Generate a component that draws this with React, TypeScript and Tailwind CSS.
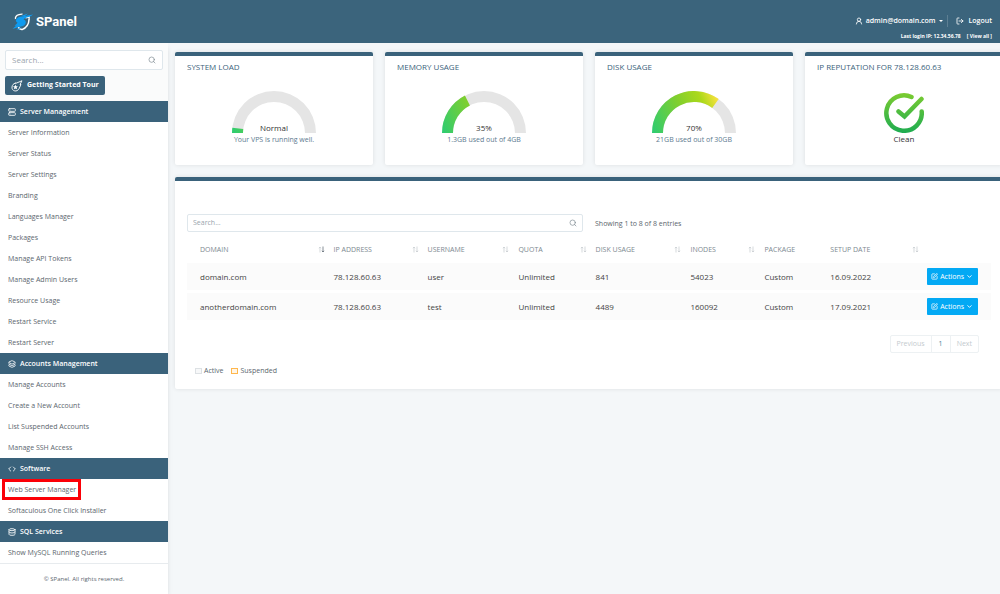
import { ChevronDown, Code, Database, Layers, LogOut, Search, Server, SquarePen, UserRound } from 'lucide-react'

const menu = [
  {
    title: 'Server Management',
    icon: Server,
    items: [
      'Server Information',
      'Server Status',
      'Server Settings',
      'Branding',
      'Languages Manager',
      'Packages',
      'Manage API Tokens',
      'Manage Admin Users',
      'Resource Usage',
      'Restart Service',
      'Restart Server',
    ],
  },
  {
    title: 'Accounts Management',
    icon: Layers,
    items: ['Manage Accounts', 'Create a New Account', 'List Suspended Accounts', 'Manage SSH Access'],
  },
  {
    title: 'Software',
    icon: Code,
    items: ['Web Server Manager', 'Softaculous One Click Installer'],
  },
  {
    title: 'SQL Services',
    icon: Database,
    items: ['Show MySQL Running Queries'],
  },
]

const columns = [
  { label: 'DOMAIN', width: 'w-[17.6%]', sort: 'active' },
  { label: 'IP ADDRESS', width: 'w-[11.7%]', sort: 'idle' },
  { label: 'USERNAME', width: 'w-[11.3%]', sort: 'idle' },
  { label: 'QUOTA', width: 'w-[9.6%]', sort: 'idle' },
  { label: 'DISK USAGE', width: 'w-[11.8%]', sort: 'idle' },
  { label: 'INODES', width: 'w-[9.2%]', sort: 'idle' },
  { label: 'PACKAGE', width: 'w-[8.2%]', sort: '' },
  { label: 'SETUP DATE', width: 'w-[12.1%]', sort: 'idle' },
]

const accounts = [
  ['domain.com', '78.128.60.63', 'user', 'Unlimited', '841', '54023', 'Custom', '16.09.2022'],
  ['anotherdomain.com', '78.128.60.63', 'test', 'Unlimited', '4489', '160092', 'Custom', '17.09.2021'],
]

function Logo() {
  return (
    <svg viewBox="0 0 22 18" className="h-[18px] w-[22px]" fill="none">
      <path d="M3.500 6C3 3.500 4.500 2.300 7 1.600C8.500 1.200 9.500 1 10.500 1.200" stroke="#fff" strokeWidth="1.300" />
      <path d="M17 6.500C16.800 11.500 14.400 15 10 16.600C8 16 7 15.300 6 14.400" stroke="#fff" strokeWidth="1.500" />
      <path d="M13.500 4.800L17.200 4L17 7" stroke="#fff" strokeWidth="1.300" />
      <path d="M21 1.500C17 2 15.500 2.600 12.500 3C8.500 3.400 5 4.300 4 6.800C3.500 8.300 4.500 9.200 5.500 9.600C5 10.800 3.500 12 2.500 13L4.500 12.600L0.500 15.800C4.500 14.900 6 14 9 13.500C12 13 13.800 11.400 13.800 9.200C13.800 7.500 12.500 6.900 11.500 6.500C12 5.800 13 5.400 14 4.800C16.500 4 19 3.500 21 1.500Z" fill="#0f9bf0" />
      <path d="M9 3L16 0.600L13 3Z" fill="#0f9bf0" />
      <path d="M4 16.500L10 14.200L7 16.500Z" fill="#0f9bf0" />
    </svg>
  )
}

function CometIcon() {
  return (
    <svg viewBox="0 0 24 24" className="size-3" fill="none" stroke="currentColor" strokeWidth="1.800" strokeLinejoin="round">
      <path d="M4 9L9 5.500L8.800 7L22 1.500L18 9L20 9L16 17.500C14 21 10.500 22.500 7.500 21.800C3.500 21 1.500 17.500 2 14C2.200 12 3 10.300 4 9Z" />
      <path d="M9 9L10.400 12.300L14 12.700L11.300 15.200L12.100 18.700L9 16.800L5.900 18.700L6.700 15.200L4 12.700L7.600 12.300Z" fill="currentColor" stroke="none" />
    </svg>
  )
}

function SortIcon({ active }: { active: boolean }) {
  return (
    <svg viewBox="0 0 7 7" className="size-[7px]" fill="none" strokeWidth="0.700">
      <path d="M2 6.500V1M0.900 2.200L2 1L3.100 2.200" stroke="#c3c9cd" />
      <path d="M5 0.500V6M3.900 4.800L5 6L6.100 4.800" stroke={active ? '#55606a' : '#c3c9cd'} />
    </svg>
  )
}

function Gauge({ id, value }: { id: string; value: number }) {
  const angle = Math.PI * (1 - value / 100)
  const x = Math.cos(angle)
  const y = Math.sin(angle)
  const sector = `M0 42A42 42 0 0 1 ${42 + 42 * x} ${42 - 42 * y}L${42 + 31 * x} ${42 - 31 * y}A31 31 0 0 0 11 42Z`

  return (
    <svg viewBox="0 0 84 42" className="h-[42px] w-[84px]">
      <defs>
        <linearGradient id={id} gradientUnits="userSpaceOnUse" x1="0" y1="40" x2="66" y2="10">
          <stop offset="0" stopColor="#2ecc71" />
          <stop offset="0.500" stopColor="#82cf2d" />
          <stop offset="0.800" stopColor="#acd91b" />
          <stop offset="1" stopColor="#f5e13d" />
        </linearGradient>
      </defs>
      <path d="M0 42A42 42 0 0 1 84 42H73A31 31 0 0 0 11 42Z" fill="#e5e5e5" />
      <path d={sector} fill={`url(#${id})`} />
    </svg>
  )
}

function StatCard({ title, children }: { title: string; children: React.ReactNode }) {
  return (
    <section className="h-[113px] rounded-xs border-t-4 border-[#3a627b] bg-white px-3 pt-[5px] shadow-[0_0_4px_#0000001a]">
      <h2 className="text-[8px] leading-3 text-[#3a627b]">{title}</h2>
      {children}
    </section>
  )
}

function GaugeCard({ title, value, label, note }: { title: string; value: number; label: string; note: string }) {
  return (
    <StatCard title={title}>
      <div className="relative mt-[18px] flex flex-col items-center">
        <Gauge id={title.replace(' ', '-')} value={value} />
        <div className="absolute top-[31px] text-[8px] leading-3 font-medium text-[#333]">{label}</div>
        <div className="pt-px text-[7px] leading-3 text-[#5c7a8f]">{note}</div>
      </div>
    </StatCard>
  )
}

export default function App() {
  return (
    <div className="flex min-h-screen flex-col overflow-hidden bg-[#f4f7f9] font-['Open_Sans',sans-serif] text-[#5b666e]">
      {/* Header */}
      <header className="flex h-[43px] items-center justify-between bg-[#3b647c] pr-2 pl-3 text-white">
        <a href="#" className="flex items-center gap-[2px]">
          <Logo />
          <span className="pt-px font-[Roboto,sans-serif] text-[13px] leading-4 font-bold">SPanel</span>
        </a>
        <div className="flex flex-col items-end gap-[3px] pt-[14px]">
          <div className="flex items-center text-[7px] leading-3 font-semibold">
            <button className="flex items-center gap-[3px] border-r border-[#5d7f93] pr-1">
              <UserRound className="size-2" strokeWidth={2.5} />
              admin@domain.com
              <svg viewBox="0 0 4 2" className="h-[2px] w-1" fill="currentColor">
                <path d="M0 0H4L2 2Z" />
              </svg>
            </button>
            <a href="#" className="ml-2 flex items-center gap-[5px]">
              <LogOut className="size-2" strokeWidth={2.5} />
              Logout
            </a>
          </div>
          <div className="flex gap-[6px] text-[5px] leading-3 font-bold">
            <span>Last login IP: 12.34.56.78</span>
            <a href="#">[ View all ]</a>
          </div>
        </div>
      </header>

      <div className="flex flex-1">
        {/* Sidebar */}
        <aside className="w-[168px] shrink-0 bg-white shadow-md">
          <div className="flex flex-col items-start gap-[6px] bg-[#fafbfb] px-[5px] pt-[7px] pb-[6px]">
            <label className="flex h-5 w-full items-center rounded-xs border border-[#dfe7ec] bg-white px-[6px]">
              <input type="search" aria-label="Search menu" placeholder="Search..." className="min-w-0 flex-1 text-[8px] leading-3 outline-none placeholder:text-[#9aa5ad]" />
              <Search className="size-2 text-[#7b8890]" />
            </label>
            <button className="flex h-[19px] items-center gap-1 rounded-xs bg-[#3a627b] px-[6px] text-[7px] font-bold text-white">
              <CometIcon />
              Getting Started Tour
            </button>
          </div>
          <nav>
            {menu.map(({ title, icon: Icon, items }) => (
              <div key={title}>
                <h3 className="flex h-[21px] items-center gap-1 bg-[#3a627b] px-2 pt-px text-[7px] leading-3 font-semibold text-white">
                  <Icon className="size-2" strokeWidth={2.5} />
                  {title}
                </h3>
                <ul>
                  {items.map((item) => (
                    <li key={item} className="relative">
                      <a href="#" className="flex h-[21px] items-center px-2 pt-[2px] text-[7px]">{item}</a>
                      {item === 'Web Server Manager' && (
                        <span className="absolute inset-y-0 left-[2px] w-[79px] border-[3px] border-[#fb0007]" />
                      )}
                    </li>
                  ))}
                </ul>
              </div>
            ))}
          </nav>
          <footer className="border-t border-[#e7ebee] py-[9px] text-center text-[6px] leading-3">© SPanel. All rights reserved.</footer>
        </aside>

        {/* Content, the last card runs slightly past the window */}
        <main className="-mr-[3px] min-w-0 flex-1 pt-[9px] pl-[7px]">
          <div className="grid grid-cols-4 gap-3">
            <GaugeCard title="SYSTEM LOAD" value={4} label="Normal" note="Your VPS is running well." />
            <GaugeCard title="MEMORY USAGE" value={35} label="35%" note="1.3GB used out of 4GB" />
            <GaugeCard title="DISK USAGE" value={70} label="70%" note="21GB used out of 30GB" />
            <StatCard title="IP REPUTATION FOR 78.128.60.63">
              <div className="mt-5 flex flex-col items-center">
                <svg viewBox="0 0 40 40" className="size-10" fill="none" strokeWidth="4.500" strokeLinecap="round">
                  <defs>
                    <linearGradient id="clean" gradientUnits="userSpaceOnUse" x1="20" y1="0" x2="20" y2="40">
                      <stop offset="0" stopColor="#7ccc30" />
                      <stop offset="1" stopColor="#1dac51" />
                    </linearGradient>
                  </defs>
                  <path d="M27.500 4A17.700 17.700 0 1 0 37.700 18.500" stroke="url(#clean)" />
                  <path d="M14.500 18.500L20.500 23.500L37.500 6" stroke="url(#clean)" />
                </svg>
                <div className="text-[8px] leading-3 font-medium text-[#333]">Clean</div>
              </div>
            </StatCard>
          </div>

          <section className="mt-3 rounded-xs border-t-4 border-[#3a627b] bg-white px-3 pt-[33px] pb-3 shadow-[0_0_4px_#0000001a]">
            <div className="grid grid-cols-2 gap-3">
              <label className="flex h-[18px] items-center rounded-xs border border-[#dfe7ec] px-[5px]">
                <input type="search" aria-label="Search accounts" placeholder="Search..." className="min-w-0 flex-1 text-[7px] leading-3 outline-none placeholder:text-[#9aa5ad]" />
                <Search className="size-2 text-[#7b8890]" />
              </label>
              <span className="pt-1 text-[7px] leading-3">Showing 1 to 8 of 8 entries</span>
            </div>

            <table className="w-full table-fixed border-separate border-spacing-x-0 border-spacing-y-[3px] text-left">
              <thead>
                <tr className="h-[25px] text-[7px] leading-3 text-[#7d8990]">
                  {columns.map((column) => (
                    <th key={column.label} scope="col" className={`${column.width} pt-1 pr-1 pl-[5px] font-normal first:pl-[13px]`}>
                      <div className="flex items-center justify-between">
                        {column.label}
                        {column.sort && <SortIcon active={column.sort === 'active'} />}
                      </div>
                    </th>
                  ))}
                  <th aria-label="Actions" />
                </tr>
              </thead>
              <tbody>
                {accounts.map((row) => (
                  <tr key={row[0]} className="h-[27px] bg-[#fbfbfb] text-[8px] leading-3 text-[#444]">
                    {row.map((cell, i) => (
                      <td key={i} className="pl-[5px] first:pl-[13px]">{cell}</td>
                    ))}
                    <td className="pl-1">
                      <button className="flex h-[17px] w-[51px] items-center justify-center gap-[2px] rounded-[1px] bg-[#03a9f4] text-[7px] text-white">
                        <SquarePen className="size-[7px]" strokeWidth={2.5} />
                        Actions
                        <ChevronDown className="size-[7px]" strokeWidth={3} />
                      </button>
                    </td>
                  </tr>
                ))}
              </tbody>
            </table>

            <div className="mt-3 mr-3 flex justify-end text-[7px] leading-4 text-[#c3cace]">
              <button className="rounded-l-xs border border-[#edf1f3] px-[6px]">Previous</button>
              <button className="-ml-px border border-[#edf1f3] px-[7px] text-[#4f7f9c]">1</button>
              <button className="-ml-px rounded-r-xs border border-[#edf1f3] px-[6px]">Next</button>
            </div>

            <div className="mt-3 ml-2 flex gap-2 text-[7px] leading-3">
              <span className="flex items-center gap-[2px]">
                <i className="h-[6px] w-[7px] border border-[#dde1e4] bg-[#f7f8f9]" />
                Active
              </span>
              <span className="flex items-center gap-[2px]">
                <i className="h-[6px] w-[7px] border border-[#ffb74d] bg-[#fff6e8]" />
                Suspended
              </span>
            </div>
          </section>
        </main>
      </div>
    </div>
  )
}
